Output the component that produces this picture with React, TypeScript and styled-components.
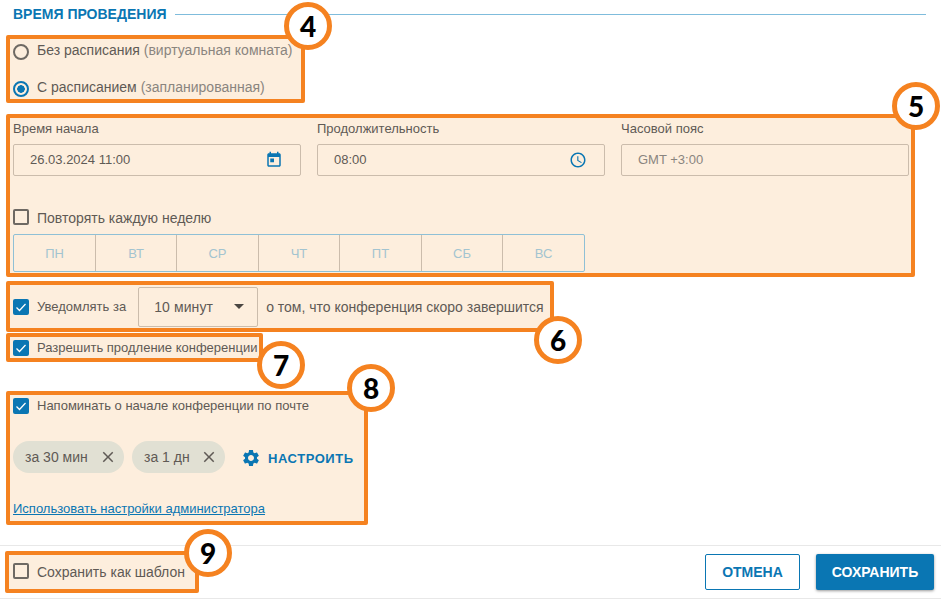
import { ReactNode } from 'react';
import styled, { createGlobalStyle } from 'styled-components';

const DAYS = ['ПН', 'ВТ', 'СР', 'ЧТ', 'ПТ', 'СБ', 'ВС'];
const FONT = '"Liberation Sans", Arial, sans-serif';

const GlobalStyle = createGlobalStyle`
  html, body {
    margin: 0;
    padding: 0;
    background: #fff;
  }
  body {
    font-family: ${FONT};
    color: #5f5a55;
  }
`;

function Check() {
  return (
    <svg width="12" height="12" viewBox="0 0 24 24" fill="none" stroke="#fff" strokeWidth="2.5">
      <path d="M3 13l6 6L21 6" />
    </svg>
  );
}

function Badge({ n, top, right }: { n: number; top: number; right: number }) {
  return <Circle $top={top} $right={right}>{n}</Circle>;
}

function CloseIcon() {
  return (
    <svg width="18" height="18" viewBox="0 0 24 24" fill="#5f5a55">
      <path d="M19 6.41 17.59 5 12 10.59 6.41 5 5 6.41 10.59 12 5 17.59 6.41 19 12 13.41 17.59 19 19 17.59 13.41 12z" />
    </svg>
  );
}

function Field({ label, value, muted, icon }: { label: string; value: string; muted?: boolean; icon?: ReactNode }) {
  return (
    <FieldWrap>
      <FieldLabel>{label}</FieldLabel>
      <Input $muted={muted}>
        {value}
        {icon}
      </Input>
    </FieldWrap>
  );
}

export default function App() {
  return (
    <Page>
      <GlobalStyle />
      <Heading>
        <HeadingText>ВРЕМЯ ПРОВЕДЕНИЯ</HeadingText>
        <HeadingLine />
      </Heading>

      <Highlight $width={299} $height={68} $top={7}>
        <RadioRow $top={1}>
          <Radio />
          <span>Без расписания <Hint>(виртуальная комната)</Hint></span>
        </RadioRow>
        <RadioRow $top={15}>
          <Radio $checked />
          <span>С расписанием <Hint>(запланированная)</Hint></span>
        </RadioRow>
        <Badge n={4} top={-37} right={-31} />
      </Highlight>

      <Highlight $width={909} $height={163} $top={11}>
        <Fields>
          <Field
            label="Время начала"
            value="26.03.2024 11:00"
            icon={
              <FieldIcon viewBox="0 0 24 24">
                <path d="M19 3h-1V1h-2v2H8V1H6v2H5c-1.11 0-1.99.9-1.99 2L3 19c0 1.1.89 2 2 2h14c1.1 0 2-.9 2-2V5c0-1.1-.9-2-2-2zm0 16H5V8h14v11zM7 10h5v5H7z" />
              </FieldIcon>
            }
          />
          <Field
            label="Продолжительность"
            value="08:00"
            icon={
              <FieldIcon viewBox="0 0 24 24">
                <path d="M11.99 2C6.47 2 2 6.48 2 12s4.47 10 9.99 10C17.52 22 22 17.52 22 12S17.52 2 11.99 2zM12 20c-4.42 0-8-3.58-8-8s3.58-8 8-8 8 3.58 8 8-3.58 8-8 8zm.5-13H11v6l5.25 3.15.75-1.23-4.5-2.67z" />
              </FieldIcon>
            }
          />
          <Field label="Часовой пояс" value="GMT +3:00" muted />
        </Fields>
        <RepeatRow>
          <CheckBox />
          <RepeatText>Повторять каждую неделю</RepeatText>
        </RepeatRow>
        <DaysRow>
          {DAYS.map(d => (
            <Day key={d}>{d}</Day>
          ))}
        </DaysRow>
        <Badge n={5} top={-36} right={-29} />
      </Highlight>

      <Highlight $width={548} $height={51} $top={4}>
        <NotifyRow>
          <CheckBox $checked><Check /></CheckBox>
          <SmallText>Уведомлять за</SmallText>
          <Select>
            10 минут
            <Caret />
          </Select>
          <NotifyTail>о том, что конференция скоро завершится</NotifyTail>
        </NotifyRow>
        <Badge n={6} top={31} right={-32} />
      </Highlight>

      <Highlight $width={257} $height={29} $top={1}>
        <SmallRow>
          <CheckBox $checked><Check /></CheckBox>
          <SmallText>Разрешить продление конференции</SmallText>
        </SmallRow>
        <Badge n={7} top={4} right={-46} />
      </Highlight>

      <Highlight $width={362} $height={134} $top={29}>
        <SmallRow>
          <CheckBox $checked><Check /></CheckBox>
          <SmallText>Напоминать о начале конференции по почте</SmallText>
        </SmallRow>
        <ChipsRow>
          <Chip $width={111}>за 30 мин<CloseIcon /></Chip>
          <Chip $width={93}>за 1 дн<CloseIcon /></Chip>
          <SetupButton>
            <svg width="20" height="20" viewBox="0 0 24 24" fill="#0a76b3">
              <path d="M19.14 12.94c.04-.3.06-.61.06-.94 0-.32-.02-.64-.07-.94l2.03-1.58c.18-.14.23-.41.12-.61l-1.92-3.32c-.12-.22-.37-.29-.59-.22l-2.39.96c-.5-.38-1.03-.7-1.62-.94l-.36-2.54c-.04-.24-.24-.41-.48-.41h-3.84c-.24 0-.43.17-.47.41l-.36 2.54c-.59.24-1.13.57-1.62.94l-2.39-.96c-.22-.08-.47 0-.59.22L2.74 8.87c-.12.21-.08.47.12.61l2.03 1.58c-.05.3-.09.63-.09.94s.02.64.07.94l-2.03 1.58c-.18.14-.23.41-.12.61l1.92 3.32c.12.22.37.29.59.22l2.39-.96c.5.38 1.03.7 1.62.94l.36 2.54c.05.24.24.41.48.41h3.84c.24 0 .44-.17.47-.41l.36-2.54c.59-.24 1.13-.56 1.62-.94l2.39.96c.22.08.47 0 .59-.22l1.92-3.32c.12-.22.07-.47-.12-.61l-2.01-1.58zM12 15.6c-1.98 0-3.6-1.62-3.6-3.6s1.62-3.6 3.6-3.6 3.6 1.62 3.6 3.6-1.62 3.6-3.6 3.6z" />
            </svg>
            НАСТРОИТЬ
          </SetupButton>
        </ChipsRow>
        <AdminLink href="#">Использовать настройки администратора</AdminLink>
        <Badge n={8} top={-31} right={-31} />
      </Highlight>

      <Footer>
        <TemplateBox>
          <TemplateCheck />
          Сохранить как шаблон
          <Badge n={9} top={-26} right={-37} />
        </TemplateBox>
        <FooterButtons>
          <CancelButton>ОТМЕНА</CancelButton>
          <SaveButton>СОХРАНИТЬ</SaveButton>
        </FooterButtons>
      </Footer>
    </Page>
  );
}

const Page = styled.div`
  width: 941px;
  height: 602px;
  overflow: hidden;
  position: relative;
  display: flex;
  flex-direction: column;
  padding-left: 6px;
  box-sizing: border-box;
`;

const Heading = styled.div`
  height: 28px;
  margin: 0 15px 0 7px;
  display: flex;
  align-items: center;
  gap: 8px;
`;

const HeadingText = styled.div`
  font-size: 14px;
  font-weight: 700;
  color: #0a76b3;
`;

const HeadingLine = styled.div`
  flex: 1;
  height: 1px;
  background: #7fbcdc;
`;

const Highlight = styled.div<{ $width: number; $height: number; $top: number }>`
  position: relative;
  box-sizing: border-box;
  flex: none;
  width: ${p => p.$width}px;
  height: ${p => p.$height}px;
  margin-top: ${p => p.$top}px;
  padding: 0 3px;
  background: #fdeedd;
  border: 4px solid #f58220;
  border-radius: 2px;
`;

const Circle = styled.div<{ $top: number; $right: number }>`
  position: absolute;
  z-index: 2;
  top: ${p => p.$top}px;
  right: ${p => p.$right}px;
  width: 48px;
  height: 48px;
  box-sizing: border-box;
  border: 5px solid #f58220;
  border-radius: 50%;
  background: #fff;
  color: #000;
  display: flex;
  align-items: center;
  justify-content: center;
  font-family: Lato, sans-serif;
  font-weight: 900;
  font-size: 28px;
`;

const RadioRow = styled.div<{ $top: number }>`
  display: flex;
  align-items: flex-start;
  gap: 8px;
  height: 20px;
  padding-top: 2px;
  margin-top: ${p => p.$top}px;
  font-size: 14px;
  line-height: 16px;
`;

const Radio = styled.div<{ $checked?: boolean }>`
  width: 16px;
  height: 16px;
  box-sizing: border-box;
  flex: none;
  margin-top: 2px;
  border-radius: 50%;
  border: 2px solid ${p => (p.$checked ? '#0a76b3' : '#6e6963')};
  background: ${p => (p.$checked ? 'radial-gradient(circle, #0a76b3 0 3.5px, transparent 4px)' : 'transparent')};
`;

const Hint = styled.span`
  color: #8a857f;
`;

const Fields = styled.div`
  display: flex;
  gap: 16px;
  margin-top: 3px;
`;

const FieldWrap = styled.div`
  flex: none;
  width: 288px;
`;

const FieldLabel = styled.div`
  font-size: 13px;
  height: 23px;
  line-height: 16px;
`;

const Input = styled.div<{ $muted?: boolean }>`
  height: 32px;
  box-sizing: border-box;
  padding: 0 17px 1px 16px;
  display: flex;
  align-items: center;
  justify-content: space-between;
  border: 1px solid #cbbcac;
  border-radius: 2px;
  font-size: 13px;
  color: ${p => (p.$muted ? '#8a857f' : '#5f5a55')};
`;

const FieldIcon = styled.svg`
  width: 18px;
  height: 18px;
  margin-top: 1px;
  fill: #0a76b3;
`;

const RepeatRow = styled.div`
  display: flex;
  align-items: center;
  gap: 8px;
  height: 20px;
  margin-top: 31px;
  font-size: 14px;
`;

const RepeatText = styled.span`
  padding-top: 2px;
`;

const CheckBox = styled.div<{ $checked?: boolean }>`
  width: 16px;
  height: 16px;
  box-sizing: border-box;
  flex: none;
  border-radius: 2px;
  display: flex;
  align-items: center;
  justify-content: center;
  border: ${p => (p.$checked ? 'none' : '2px solid #6e6963')};
  background: ${p => (p.$checked ? '#0a76b3' : 'transparent')};
`;

const TemplateCheck = styled(CheckBox)`
  margin-top: -3px;
`;

const DaysRow = styled.div`
  width: 572px;
  height: 38px;
  margin-top: 7px;
  box-sizing: border-box;
  display: grid;
  grid-template-columns: 81px 81px 82px 81px 82px 81px 1fr;
  border: 1px solid #8fc0d6;
  border-radius: 2px;
`;

const Day = styled.div`
  display: flex;
  align-items: center;
  justify-content: center;
  font-size: 13px;
  color: #a3c4d0;
  & + & {
    border-left: 1px solid #cbbcac;
  }
`;

const NotifyRow = styled.div`
  height: 43px;
  display: flex;
  align-items: center;
  font-size: 14px;
`;

const NotifyTail = styled.span`
  margin-left: 8px;
  white-space: nowrap;
`;

const SmallRow = styled.div`
  height: 21px;
  display: flex;
  align-items: center;
  gap: 8px;
`;

const SmallText = styled.span`
  font-size: 13px;
  white-space: nowrap;
  ${NotifyRow} & {
    margin-left: 8px;
  }
`;

const Select = styled.div`
  width: 120px;
  height: 40px;
  box-sizing: border-box;
  margin-left: 12px;
  padding: 0 13px 0 15px;
  flex: none;
  display: flex;
  align-items: center;
  justify-content: space-between;
  border: 1px solid #cbbcac;
  border-radius: 2px;
  font-size: 14px;
  letter-spacing: 0.1px;
`;

const Caret = styled.div`
  width: 0;
  height: 0;
  margin-right: 0;
  border-left: 5.5px solid transparent;
  border-right: 5.5px solid transparent;
  border-top: 5px solid #4a4642;
`;

const ChipsRow = styled.div`
  display: flex;
  align-items: center;
  gap: 8px;
  margin-top: 25px;
`;

const Chip = styled.div<{ $width: number }>`
  width: ${p => p.$width}px;
  height: 32px;
  box-sizing: border-box;
  padding: 0 7px 0 12px;
  display: flex;
  align-items: center;
  justify-content: space-between;
  border-radius: 16px;
  background: #e1e0d3;
  font-size: 14px;
`;

const SetupButton = styled.button`
  display: flex;
  align-items: center;
  gap: 7px;
  margin: 2px 0 0 8px;
  padding: 0;
  border: none;
  background: none;
  font: 700 13px ${FONT};
  letter-spacing: 0.55px;
  color: #0a76b3;
`;

const AdminLink = styled.a`
  display: block;
  margin-top: 28px;
  font-size: 13px;
  color: #0a76b3;
`;

const Footer = styled.div`
  position: absolute;
  left: 0;
  right: 0;
  top: 545px;
  height: 54px;
  box-sizing: border-box;
  display: flex;
  align-items: center;
  justify-content: space-between;
  padding: 0 7px 0 5px;
  border-top: 1px solid #e8e8e8;
  border-bottom: 1px solid #e8e8e8;
`;

const TemplateBox = styled.div`
  position: relative;
  width: 194px;
  height: 42px;
  box-sizing: border-box;
  padding: 0 4px;
  display: flex;
  align-items: center;
  gap: 8px;
  font-size: 14px;
  background: #fdeedd;
  border: 4px solid #f58220;
  border-radius: 2px;
`;

const FooterButtons = styled.div`
  display: flex;
  gap: 16px;
`;

const CancelButton = styled.button`
  width: 95px;
  height: 36px;
  box-sizing: border-box;
  background: #fff;
  border: 1px solid #0a76b3;
  border-radius: 2px;
  color: #0a76b3;
  font: 700 14px ${FONT};
`;

const SaveButton = styled.button`
  width: 118px;
  height: 36px;
  box-sizing: border-box;
  background: #0a76b3;
  border: none;
  border-radius: 2px;
  color: #fff;
  font: 700 14px ${FONT};
  box-shadow: 0 1px 3px rgba(0, 0, 0, 0.4);
`;
